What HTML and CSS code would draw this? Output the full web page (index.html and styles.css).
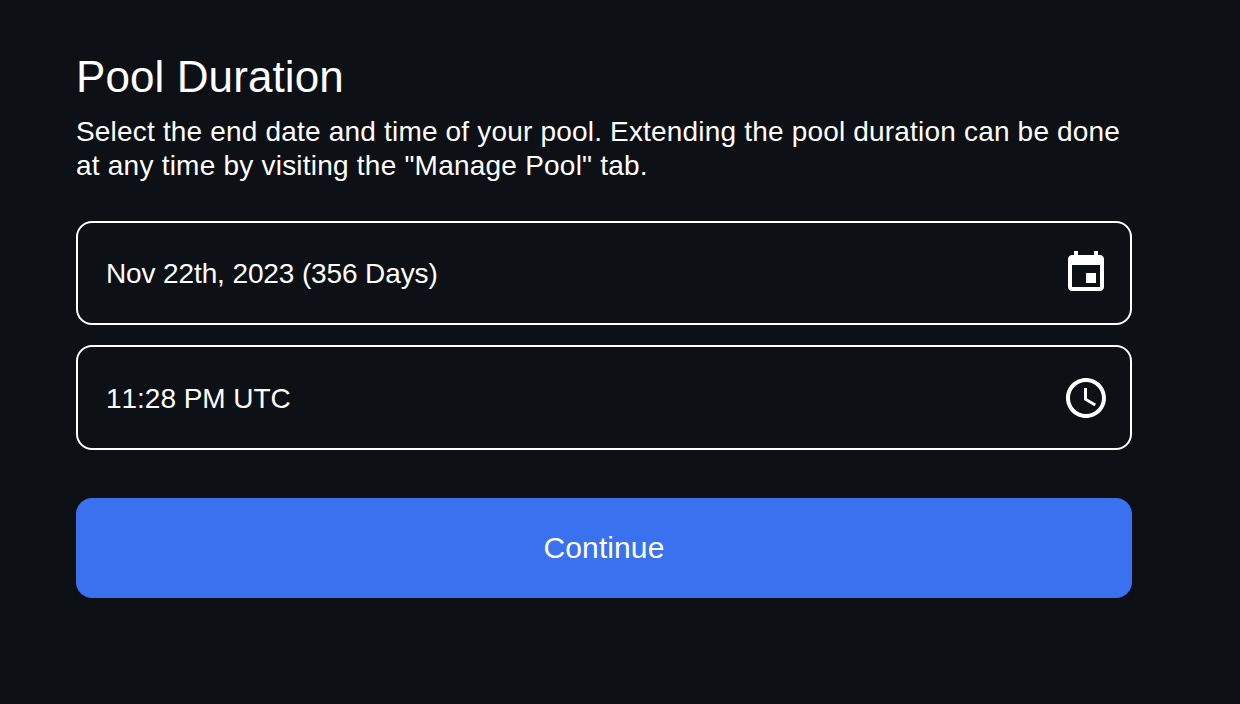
FILE: index.html
```html
<!DOCTYPE html>
<html lang="en">
<head>
<meta charset="utf-8">
<title>Pool Duration</title>
<link rel="stylesheet" href="styles.css">
</head>
<body>
<main class="panel">
  <h1 class="title">Pool Duration</h1>
  <p class="description">Select the end date and time of your pool. Extending the pool duration can be done<br><span class="line-second">at any time by visiting the "Manage Pool" tab.</span></p>
  <div class="fields">
    <div class="field">
      <span class="value value-date">Nov 22th, 2023 (356 Days)</span>
      <svg class="icon" viewBox="0 0 24 24" aria-hidden="true"><path d="M17 12h-5v5h5v-5zM16 1v2H8V1H6v2H5c-1.11 0-1.99.9-1.99 2L3 19c0 1.1.89 2 2 2h14c1.1 0 2-.9 2-2V5c0-1.1-.9-2-2-2h-1V1h-2zm3 18H5V8h14v11z"/></svg>
    </div>
    <div class="field field-time">
      <span class="value value-time">11:28 PM UTC</span>
      <svg class="icon" viewBox="0 0 24 24" aria-hidden="true"><path d="M11.99 2C6.47 2 2 6.48 2 12s4.47 10 9.99 10C17.52 22 22 17.52 22 12S17.52 2 11.99 2zM12 20c-4.42 0-8-3.58-8-8s3.58-8 8-8 8 3.58 8 8-3.58 8-8 8zm.5-13H11v6l5.25 3.15.75-1.23-4.5-2.67z"/></svg>
    </div>
  </div>
  <button class="continue" type="button">Continue</button>
</main>
</body>
</html>
```
FILE: styles.css
```css
* { box-sizing: border-box; }
body {
  margin: 0;
  min-height: 704px;
  background: #0d1014;
  color: #fff;
  font-family: "Liberation Sans", Arial, sans-serif;
}
.panel {
  width: 1132px;
  padding: 52px 0 0 76px;
}
.title {
  margin: 0;
  font-size: 44px;
  font-weight: 400;
  line-height: 50px;
  letter-spacing: 0.09px;
}
.description {
  margin: 13px 0 0;
  font-size: 28px;
  line-height: 34px;
  letter-spacing: 0.185px;
  white-space: nowrap;
}
.line-second { letter-spacing: 0.225px; }
.fields {
  display: flex;
  flex-direction: column;
  gap: 20px;
  margin-top: 38px;
}
.field {
  display: flex;
  align-items: center;
  justify-content: space-between;
  height: 104px;
  padding: 0 20px 0 28px;
  border: 2px solid #fff;
  border-radius: 16px;
  font-size: 28px;
}
.field-time {
  height: 105px;
  padding-top: 1px;
}
.value { padding-top: 2px; }
.value-date { letter-spacing: -0.12px; }
.value-time {
  font-kerning: none;
  letter-spacing: -0.03px;
}
.icon {
  width: 48px;
  height: 48px;
  fill: #fff;
}
.continue {
  display: block;
  width: 100%;
  height: 100px;
  margin-top: 48px;
  padding: 0;
  border: 0;
  border-radius: 16px;
  background: #3971ee;
  color: #fff;
  font-family: inherit;
  font-size: 30px;
  letter-spacing: 0.1px;
}
```
